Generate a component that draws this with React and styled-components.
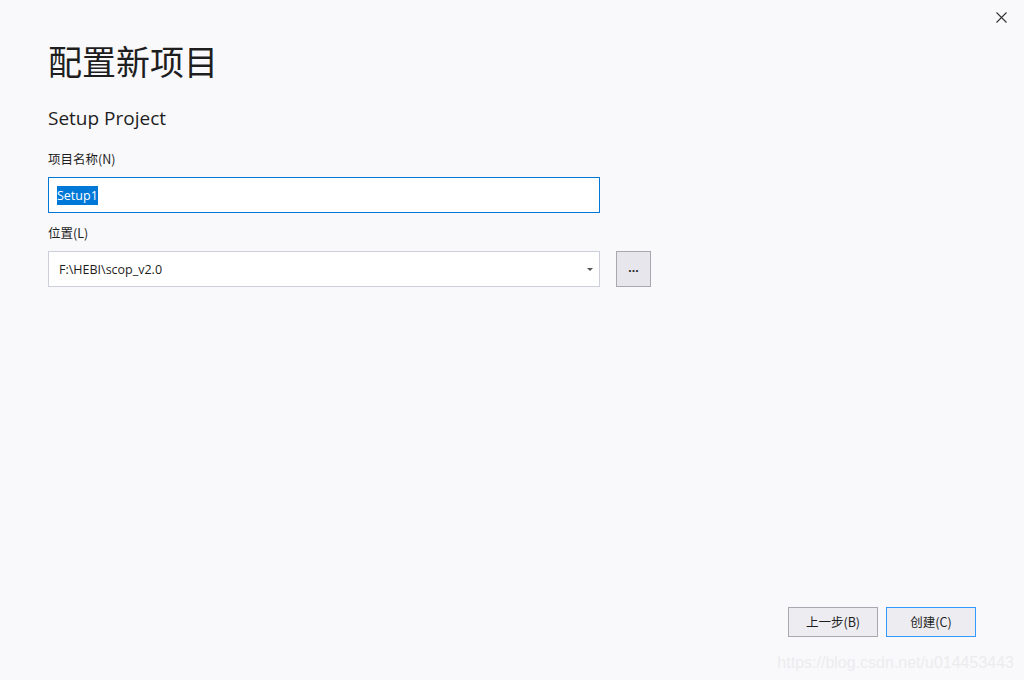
import styled, { createGlobalStyle } from 'styled-components';

const Global = createGlobalStyle`
  html, body {
    margin: 0;
    padding: 0;
    background: #f9f9fb;
  }
  body {
    font-family: "Noto Sans CJK SC", "Open Sans", sans-serif;
    color: #1e1e1e;
  }
`;

const Window = styled.div`
  position: relative;
  width: 1024px;
  height: 680px;
  background: #f9f9fb;
  display: flex;
  flex-direction: column;
  box-sizing: border-box;
  padding: 0 48px;
`;

const Close = styled.button`
  position: absolute;
  top: 8px;
  right: 14px;
  width: 18px;
  height: 18px;
  border: none;
  background: none;
  padding: 0;
  display: flex;
  align-items: center;
  justify-content: center;
`;

const Title = styled.h1`
  margin: 35px 0 0;
  font-size: 34px;
  font-weight: 400;
  line-height: 52px;
`;

const Subtitle = styled.h2`
  margin: 18px 0 0;
  font-family: "Open Sans", "Noto Sans", sans-serif;
  font-size: 19px;
  font-weight: 400;
  line-height: 26px;
`;

const Label = styled.div`
  margin-top: ${p => p.$top}px;
  font-size: 12.5px;
  line-height: 18px;
`;

const Row = styled.div`
  display: flex;
  align-items: center;
  gap: 16px;
  margin-top: 9px;
`;

const Field = styled.div`
  width: 552px;
  height: 36px;
  box-sizing: border-box;
  background: #fff;
  border: 1px solid ${p => (p.$focus ? '#0078d7' : '#cccedb')};
  display: flex;
  align-items: center;
  padding: 0 ${p => (p.$focus ? 8 : 10)}px;
  font-family: "Open Sans", "Noto Sans", sans-serif;
  font-size: 12.5px;
`;

const Selected = styled.span`
  background: #0078d7;
  color: #fff;
  padding: 1px 0;
`;

const Value = styled.span`
  flex: 1;
`;

const Caret = styled.span`
  width: 0;
  height: 0;
  border-left: 3.5px solid transparent;
  border-right: 3.5px solid transparent;
  border-top: 3px solid #555;
  margin-right: -4px;
`;

const Browse = styled.button`
  width: 35px;
  height: 36px;
  box-sizing: border-box;
  background: #e6e6ec;
  border: 1px solid #a8a8b0;
  font-family: "Open Sans", sans-serif;
  font-size: 12px;
  font-weight: 700;
  color: #1e1e1e;
  padding: 0 0 4px;
`;

const Spacer = styled.div`
  flex: 1;
`;

const Footer = styled.div`
  display: flex;
  justify-content: flex-end;
  gap: 8px;
  margin-bottom: 43px;
`;

const Button = styled.button`
  width: 90px;
  height: 30px;
  box-sizing: border-box;
  background: #ececf1;
  border: 1px solid ${p => (p.$primary ? '#3399ff' : '#a8a8b0')};
  font-family: "Noto Sans CJK SC", "Open Sans", sans-serif;
  font-size: 12.5px;
  color: #1e1e1e;
  padding: 0 0 1px;
`;

const Watermark = styled.div`
  position: absolute;
  right: 10px;
  bottom: 8px;
  font-family: "Liberation Sans", Arial, sans-serif;
  font-size: 16px;
  color: #ececee;
`;

export default function App() {
  return (
    <>
      <Global />
      <Window>
        <Close aria-label="close">
          <svg width="11" height="11" viewBox="0 0 11 11">
            <path d="M0.5 0.5L10.5 10.5M10.5 0.5L0.5 10.5" stroke="#333" strokeWidth="1.1" />
          </svg>
        </Close>
        <Title>配置新项目</Title>
        <Subtitle>Setup Project</Subtitle>

        <Label $top={19}>项目名称(N)</Label>
        <Row>
          <Field $focus>
            <Selected>Setup1</Selected>
          </Field>
        </Row>

        <Label $top={11}>位置(L)</Label>
        <Row>
          <Field>
            <Value>F:\HEBI\scop_v2.0</Value>
            <Caret />
          </Field>
          <Browse>...</Browse>
        </Row>

        <Spacer />
        <Footer>
          <Button>上一步(B)</Button>
          <Button $primary>创建(C)</Button>
        </Footer>
        <Watermark>https://blog.csdn.net/u014453443</Watermark>
      </Window>
    </>
  );
}
